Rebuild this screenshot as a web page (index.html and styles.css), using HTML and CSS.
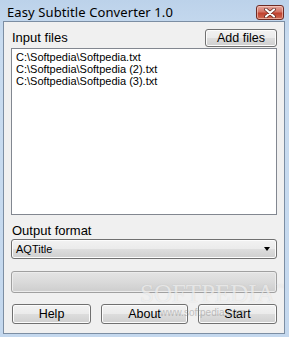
FILE: index.html
```html
<!DOCTYPE html>
<html>
  <head>
    <title>Easy Subtitle Converter 1.0</title>
    <link rel="stylesheet" href="styles.css">
  </head>
  <body>
    <div class="window">

      <div class="title-bar">
        <span class="title-text">Easy Subtitle Converter 1.0</span>
        <button class="close-button">
          <svg width="14" height="10" viewBox="0 0 14 10">
            <path d="M3 1.5 L11 8.5 M11 1.5 L3 8.5" stroke="#5a2018" stroke-width="3.6" stroke-linecap="round"/>
            <path d="M3 1.5 L11 8.5 M11 1.5 L3 8.5" stroke="#ffffff" stroke-width="2.2" stroke-linecap="round"/>
          </svg>
        </button>
      </div>

      <div class="client">

        <div class="top-row">
          <span class="label label-input">Input files</span>
          <button class="win-button add-button">Add files</button>
        </div>

        <div class="list-box">
          <div class="list-item">C:\Softpedia\Softpedia.txt</div>
          <div class="list-item">C:\Softpedia\Softpedia (2).txt</div>
          <div class="list-item">C:\Softpedia\Softpedia (3).txt</div>
        </div>

        <div class="label label-output">Output format</div>

        <div class="combo">
          <span class="combo-text">AQTitle</span>
          <span class="combo-arrow"></span>
        </div>

        <div class="progress"></div>

        <div class="button-row">
          <button class="win-button side-button">Help</button>
          <button class="win-button about-button">About</button>
          <button class="win-button side-button">Start</button>
        </div>

        <!-- watermark on top of the picture -->
        <div class="watermark">SOFTPEDIA<span class="tm">TM</span></div>
        <div class="watermark-url">www.softpedia.com</div>

      </div>
    </div>
  </body>
</html>
```

FILE: styles.css
```css
* {
  box-sizing: border-box;
}

body {
  margin: 0;
  width: 289px;
  height: 337px;
  overflow: hidden;
  background-color: #c9dbee;
}

.window {
  width: 289px;
  height: 337px;
  padding: 0 4px 3px 3px;
  background: linear-gradient(#bcd2ea, #c9dcf0 40px, #c4d8ee);
  display: flex;
  flex-direction: column;
}

.title-bar {
  height: 21px;
  flex-shrink: 0;
  display: flex;
  align-items: flex-start;
  position: relative;
}

.title-text {
  font-family: "Noto Sans", "DejaVu Sans", sans-serif;
  font-size: 13px;
  color: #000;
  margin-left: 4px;
  margin-top: 3px;
  letter-spacing: 0.1px;
}

.close-button {
  position: absolute;
  left: 253px;
  top: 5px;
  width: 28px;
  height: 15px;
  padding: 0;
  border: 1px solid #6e2b24;
  border-radius: 3px;
  background: linear-gradient(#e6a79d, #d37466 45%, #c0412f 55%, #d06c55);
  box-shadow: inset 0 0 0 1px rgba(255, 220, 210, 0.55);
  display: flex;
  align-items: center;
  justify-content: center;
}

.client {
  flex: 1;
  position: relative;
  overflow: hidden;
  background-color: #f0f0f0;
  border: 1px solid #7c8ea3;
  display: flex;
  flex-direction: column;
  padding: 0 7px 0 7px;
  font-family: "Liberation Sans", Arial, sans-serif;
  color: #000;
}

.top-row {
  display: flex;
  justify-content: space-between;
  align-items: flex-start;
  margin-top: 7px;
  height: 19px;
  flex-shrink: 0;
}

.label {
  font-size: 13px;
  margin-left: 1px;
}

.label-input {
  margin-top: 1px;
}

.win-button {
  font-family: "Liberation Sans", Arial, sans-serif;
  font-size: 12.5px;
  color: #000;
  border: 1px solid #707070;
  border-radius: 3px;
  background: linear-gradient(#f2f2f2, #ebebeb 48%, #dddddd 52%, #cfcfcf);
  box-shadow: inset 0 0 0 1px #fcfcfc;
  padding: 0;
}

.add-button {
  width: 72px;
  height: 18px;
}

.list-box {
  height: 167px;
  flex-shrink: 0;
  background-color: #fff;
  border: 1px solid #828790;
  padding: 2px 4px;
}

.list-item {
  font-size: 11px;
  line-height: 12px;
}

.label-output {
  margin-top: 7px;
  height: 17px;
  line-height: 17px;
  flex-shrink: 0;
}

.combo {
  height: 20px;
  flex-shrink: 0;
  border: 1px solid #707070;
  border-radius: 3px;
  background: linear-gradient(#f2f2f2, #ebebeb 48%, #dddddd 52%, #cfcfcf);
  box-shadow: inset 0 0 0 1px #fcfcfc;
  display: flex;
  align-items: center;
  justify-content: space-between;
  padding: 0 6px 0 4px;
}

.combo-text {
  font-size: 11px;
}

.combo-arrow {
  width: 0;
  height: 0;
  border-left: 3.5px solid transparent;
  border-right: 3.5px solid transparent;
  border-top: 4px solid #000;
}

.progress {
  margin-top: 12px;
  height: 22px;
  flex-shrink: 0;
  border: 1px solid #a0a0a0;
  border-radius: 3px;
  background: linear-gradient(#e4e4e4, #dadada 50%, #cdcdcd);
  box-shadow: inset 0 0 0 1px #ececec;
}

.button-row {
  display: flex;
  gap: 10px;
  margin-top: 11px;
  margin-left: 1px;
  flex-shrink: 0;
}

.side-button {
  width: 79px;
  height: 20px;
}

.about-button {
  width: 87px;
  height: 20px;
}

.watermark {
  position: absolute;
  left: 136px;
  top: 250px;
  font-family: "Liberation Serif", serif;
  font-size: 25px;
  line-height: 28px;
  color: rgba(255, 255, 255, 0.6);
  text-shadow: 0 0 1px rgba(150, 150, 150, 0.35);
  pointer-events: none;
}

.tm {
  font-size: 6px;
  vertical-align: 14px;
  margin-left: 2px;
}

.watermark-url {
  position: absolute;
  left: 156px;
  top: 285px;
  font-family: "Liberation Sans", Arial, sans-serif;
  font-size: 10px;
  color: rgba(140, 140, 140, 0.5);
  pointer-events: none;
}
```
